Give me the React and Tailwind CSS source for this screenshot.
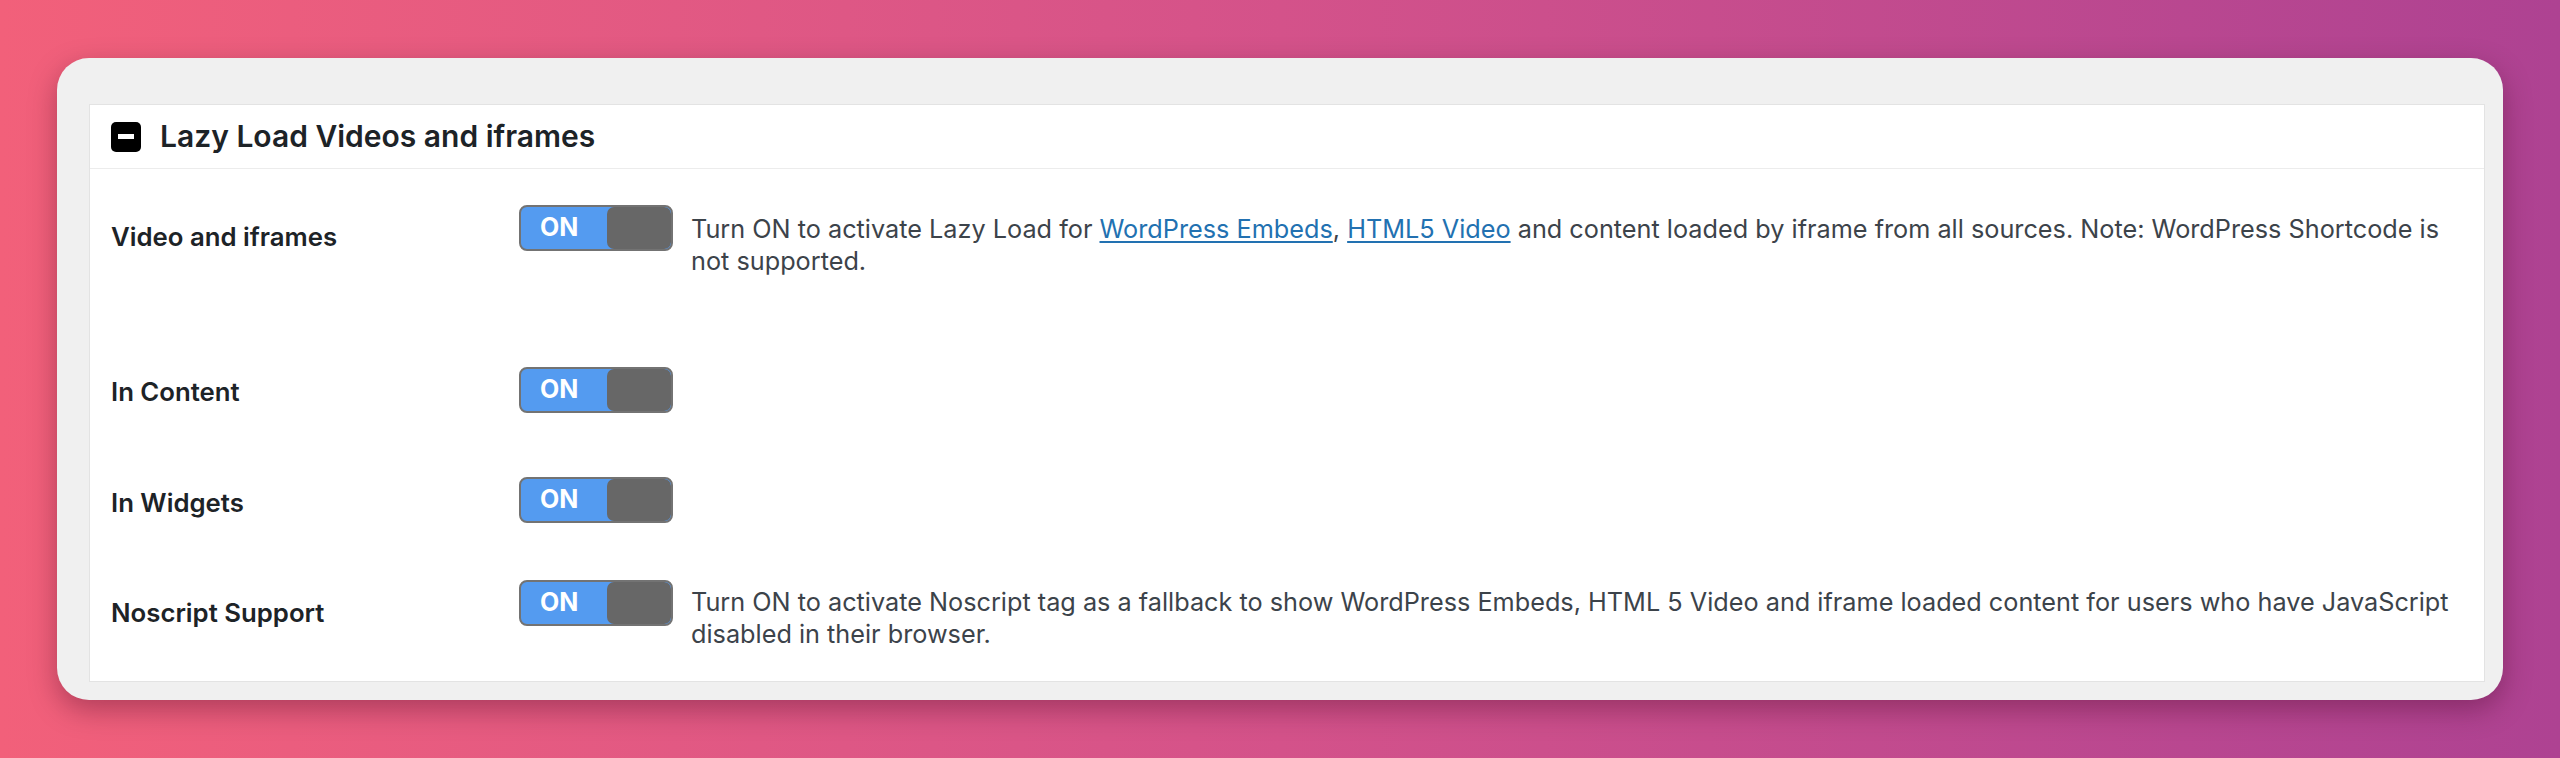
import React from "react";

const font = { fontFamily: "Inter, 'Noto Sans', sans-serif" };

function Toggle() {
  return (
    <div className="flex h-[46px] w-[154px] shrink-0 overflow-hidden rounded-[8px] border-2 border-[#737373] bg-[#549bf0]">
      <div className="flex w-[86px] items-center pl-[19px] text-[25px] font-bold text-white">ON</div>
      <div className="flex-1 rounded-[7px] bg-[#676767]" />
    </div>
  );
}

function Link({ children }) {
  return <a href="#" className="text-[#2271b1] underline underline-offset-[3px]">{children}</a>;
}

const rows = [
  {
    label: "Video and iframes",
    h: "h-[161px]",
    labelPt: "pt-[52px]",
    descPt: "pt-[44px]",
    toggleMt: "mt-[36px]",
    desc: (
      <>
        Turn ON to activate Lazy Load for <Link>WordPress Embeds</Link>, <Link>HTML5 Video</Link> and content loaded by iframe from all sources. Note: WordPress Shortcode is not supported.
      </>
    ),
  },
  { label: "In Content", h: "h-[110px]", labelPt: "pt-[46px]", toggleMt: "mt-[37px]" },
  { label: "In Widgets", h: "h-[103px]", labelPt: "pt-[47px]", toggleMt: "mt-[37px]" },
  {
    label: "Noscript Support",
    h: "h-[138px]",
    labelPt: "pt-[54px]",
    descPt: "pt-[43px]",
    toggleMt: "mt-[37px]",
    desc: "Turn ON to activate Noscript tag as a fallback to show WordPress Embeds, HTML 5 Video and iframe loaded content for users who have JavaScript disabled in their browser.",
  },
];

export default function App() {
  return (
    <div
      className="h-[758px] w-full bg-gradient-to-r from-[#f2607a] via-[#d4528a] to-[#ae4292] px-[57px] pt-[58px]"
      style={font}
    >
      <div className="rounded-[32px] bg-[#f0f0f0] pb-[18px] pl-[32px] pr-[18px] pt-[46px] shadow-[0_10px_28px_rgba(60,0,30,0.35)]">
        <div className="border border-[#e3e3e3] bg-white">
          {/* header */}
          <div className="flex h-[64px] items-center gap-[19px] border-b border-[#ececec] px-[21px]">
            <div className="flex h-[30px] w-[30px] items-center justify-center rounded-[5px] bg-black">
              <div className="h-[5px] w-[16px] bg-white" />
            </div>
            <h2 className="text-[30px] font-semibold text-[#1d2327]">Lazy Load Videos and iframes</h2>
          </div>

          {/* rows */}
          {rows.map((r) => (
            <div key={r.label} className={`flex items-start px-[21px] ${r.h}`}>
              <div className={`w-[408px] shrink-0 text-[25.75px] font-semibold leading-[32px] text-[#1d2327] ${r.labelPt}`}>
                {r.label}
              </div>
              <div className={r.toggleMt}>
                <Toggle />
              </div>
              {r.desc && (
                <p className={`pl-[18px] text-[25.25px] leading-[32px] text-[#3c434a] ${r.descPt}`}>{r.desc}</p>
              )}
            </div>
          ))}
        </div>
      </div>
    </div>
  );
}
